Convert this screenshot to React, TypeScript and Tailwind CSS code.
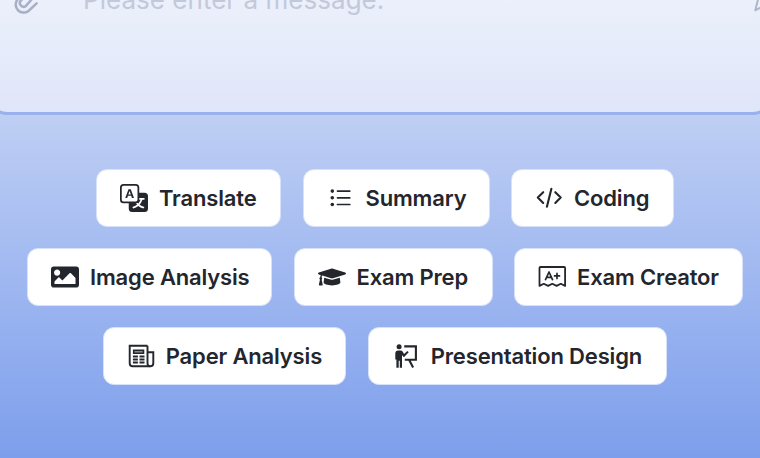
import type { ReactNode } from "react"
import { BsTranslate } from "react-icons/bs"
import { FaGraduationCap, FaImage } from "react-icons/fa"

function ListIcon() {
  return (
    <svg width="28" height="28" viewBox="0 0 28 28" fill="currentColor">
      <circle cx="5.3" cy="7.1" r="1.8" />
      <circle cx="5.3" cy="13.8" r="1.8" />
      <circle cx="5.3" cy="20.5" r="1.8" />
      <path d="M10.5 7.1h12.3M10.5 13.8h12.3M10.5 20.5h12.3" stroke="currentColor" strokeWidth="1.7" strokeLinecap="round" />
    </svg>
  )
}

function CodeIcon() {
  return (
    <svg width="28" height="28" viewBox="0 0 28 28" fill="none" stroke="currentColor" strokeWidth="2.1" strokeLinecap="round" strokeLinejoin="round">
      <path d="M8.2 8.2 2.8 13.6 8.2 19M20.3 8.2l5.4 5.4-5.4 5.4M16.4 4.7l-4.5 18" />
    </svg>
  )
}

function ExamIcon() {
  return (
    <svg width="28" height="28" viewBox="0 0 28 28" fill="none" stroke="currentColor" strokeWidth="1.8" strokeLinecap="round" strokeLinejoin="round">
      <path d="M1.5 22.9V5q0-1 1-1h23.6q1 0 1 1v17.9l-4.3-2.1-4.2 2.1-4.3-2.1-4.2 2.1-4.3-2.1z" />
      <path d="M7.5 16.6 11 9l3.5 7.6M8.6 14.4h4.8M16.5 12.9h5M19 10.4v5" strokeWidth="1.7" />
    </svg>
  )
}

function PaperIcon() {
  return (
    <svg width="28" height="28" viewBox="0 0 28 28" fill="none" stroke="currentColor" strokeWidth="1.9">
      <path d="M20.5 3.7H2.7v17.5q0 3 3 3h17.6q3 0 3-3V10.3h-5.8" />
      <path d="M20.5 3.7v17.5q0 3 2.5 3" />
      <path d="M6.7 8.2h9.8v3H6.7z" fill="#85868b" strokeWidth="1.6" />
      <path d="M5.9 14.5h5M12.5 14.5h5M5.9 17.5h5M12.5 17.5h5M5.9 20.5h5M12.5 20.5h5" strokeWidth="1.8" />
    </svg>
  )
}

function PresenterIcon() {
  return (
    <svg width="28" height="28" viewBox="0 0 28 28" fill="currentColor">
      <circle cx="7.1" cy="4.7" r="2.5" />
      <path d="M6.3 8.4h2.3q1.3 0 2 1.1l1.5 2.5 3.2-3 1.4 1.3-4.3 4.4q-.7.6-1.3-.2L10 13v12.8H7.8v-7H6.7v7H4.4v-8.4H3.3v-6q0-3 3-3z" />
      <path d="M12.2 4.4h11.7v13.4H12.8M17.2 18l3.9 7.5" fill="none" stroke="currentColor" strokeWidth="2.1" />
    </svg>
  )
}

type Action = { label: string; width: string; icon: ReactNode }

const rows: Action[][] = [
  [
    { label: "Translate", width: "w-[185px]", icon: <BsTranslate size={28} /> },
    { label: "Summary", width: "w-[187px]", icon: <ListIcon /> },
    { label: "Coding", width: "w-[163px]", icon: <CodeIcon /> },
  ],
  [
    { label: "Image Analysis", width: "w-[245px]", icon: <FaImage size={28} /> },
    { label: "Exam Prep", width: "w-[199px]", icon: <FaGraduationCap size={28} /> },
    { label: "Exam Creator", width: "w-[229px]", icon: <ExamIcon /> },
  ],
  [
    { label: "Paper Analysis", width: "w-[243.5px]", icon: <PaperIcon /> },
    { label: "Presentation Design", width: "w-[299.5px]", icon: <PresenterIcon /> },
  ],
]

function ActionButton({ label, width, icon }: Action) {
  return (
    <button className={`${width} flex h-[57.5px] shrink-0 items-center gap-[11px] rounded-[11px] border border-[#d7e1fa] bg-white pl-[23px] whitespace-nowrap text-[#24262d]`}>
      <span className="flex w-7 shrink-0 items-center justify-center">{icon}</span>
      <span className="text-[22px] leading-7 font-[570] tracking-[-0.16px]">{label}</span>
    </button>
  )
}

export default function App() {
  return (
    <div className="h-[458px] w-[760px] overflow-hidden bg-linear-to-b from-[#d6dff5] to-[#7d9eec] font-[Inter,sans-serif]">
      {/* Message box */}
      <div className="-mx-[11px] flow-root h-[115px] rounded-b-[18px] border-x-[2.5px] border-b-[3px] border-[#99b2ee] bg-linear-to-b from-[#ebf0fb] to-[#e0e6f9]">
        <div className="-mt-[18px] flex h-9 items-center pl-[19px]">
          <svg width="28" height="34" viewBox="0 0 28 34" fill="none" stroke="#a9b0c6" strokeWidth="2.5" strokeLinecap="round" strokeLinejoin="round" className="shrink-0">
            <path d="m26.6 20.4-8.1 7.6A8 8 0 0 1 7.3 16.8L18 5.5a5 5 0 0 1 7 7.1L15.9 22.9a3.7 3.7 0 0 1-5.2-5.2l8-8" />
          </svg>
          <span className="ml-[45px] text-[26px] leading-9 tracking-[0.03px] whitespace-nowrap text-[#c3c9da]">Please enter a message.</span>
          <svg width="28" height="28" viewBox="0 0 28 28" fill="none" stroke="#afb6cc" strokeWidth="2" strokeLinejoin="round" className="mr-[-11px] ml-auto shrink-0">
            <path d="m3.3 24.3 3-12L4.5 2 27 11.5z" />
          </svg>
        </div>
      </div>

      {/* Quick actions */}
      <div className="flex flex-col gap-[21.7px] pt-[54px] pl-[10px]">
        {rows.map((row, i) => (
          <div key={i} className="flex justify-center gap-[21.5px]">
            {row.map(action => (
              <ActionButton key={action.label} {...action} />
            ))}
          </div>
        ))}
      </div>
    </div>
  )
}
